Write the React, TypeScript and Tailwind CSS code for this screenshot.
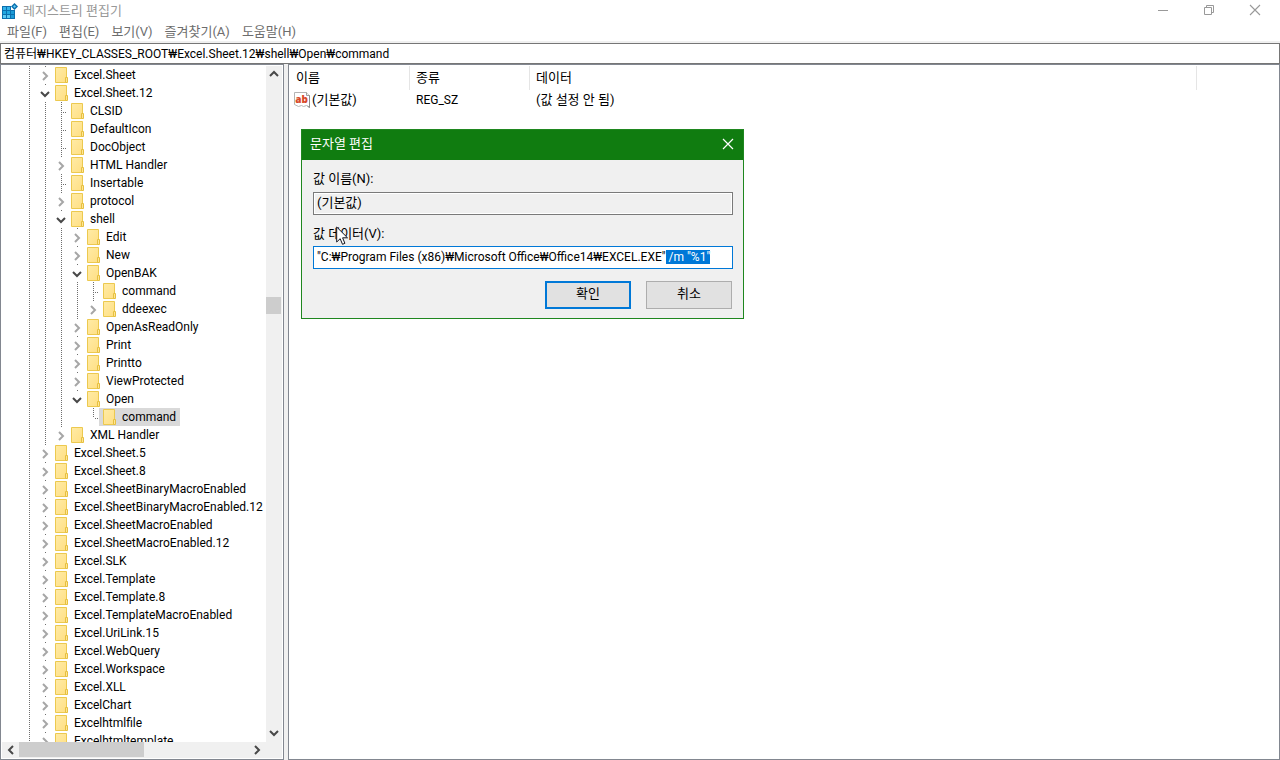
import { useEffect, useRef } from "react";

type NodeState = "leaf" | "open" | "closed";

interface TreeRow {
  label: string;
  state: NodeState;
  /** Columns left of the toggle; true where the ancestor line continues. */
  guides: boolean[];
  last?: boolean;
  selected?: boolean;
}

const top = [true];
const sheet = [true, true];
const shell = [true, true, true];

const rows: TreeRow[] = [
  { label: "Excel.Sheet", state: "closed", guides: top },
  { label: "Excel.Sheet.12", state: "open", guides: top },
  { label: "CLSID", state: "leaf", guides: sheet },
  { label: "DefaultIcon", state: "leaf", guides: sheet },
  { label: "DocObject", state: "leaf", guides: sheet },
  { label: "HTML Handler", state: "closed", guides: sheet },
  { label: "Insertable", state: "leaf", guides: sheet },
  { label: "protocol", state: "closed", guides: sheet },
  { label: "shell", state: "open", guides: sheet },
  { label: "Edit", state: "closed", guides: shell },
  { label: "New", state: "closed", guides: shell },
  { label: "OpenBAK", state: "open", guides: shell },
  { label: "command", state: "leaf", guides: [...shell, true] },
  { label: "ddeexec", state: "closed", guides: [...shell, true], last: true },
  { label: "OpenAsReadOnly", state: "closed", guides: shell },
  { label: "Print", state: "closed", guides: shell },
  { label: "Printto", state: "closed", guides: shell },
  { label: "ViewProtected", state: "closed", guides: shell },
  { label: "Open", state: "open", guides: shell, last: true },
  { label: "command", state: "leaf", guides: [...shell, false], last: true, selected: true },
  { label: "XML Handler", state: "closed", guides: sheet, last: true },
  ...[
    "Excel.Sheet.5",
    "Excel.Sheet.8",
    "Excel.SheetBinaryMacroEnabled",
    "Excel.SheetBinaryMacroEnabled.12",
    "Excel.SheetMacroEnabled",
    "Excel.SheetMacroEnabled.12",
    "Excel.SLK",
    "Excel.Template",
    "Excel.Template.8",
    "Excel.TemplateMacroEnabled",
    "Excel.UriLink.15",
    "Excel.WebQuery",
    "Excel.Workspace",
    "Excel.XLL",
    "ExcelChart",
    "Excelhtmlfile",
    "Excelhtmltemplate",
  ].map((label): TreeRow => ({ label, state: "closed", guides: top })),
];

const menus = ["파일(F)", "편집(E)", "보기(V)", "즐겨찾기(A)", "도움말(H)"];

function RegistryIcon() {
  return (
    <svg width="16" height="16" viewBox="0 0 16 16" aria-hidden="true">
      <path d="M0 3h13v13H0z" fill="#0b6fae" />
      <path d="M1 4h3v3H1zM5 4h3v3H5z" fill="#35b4ea" />
      <path d="M1 8h3v3H1zM5 8h3v3H5z" fill="#22a7e0" />
      <path d="M9 8h3v3H9zM9 12h3v3H9z" fill="#1b9ad6" />
      <path d="M1 12h3v3H1zM5 12h3v3H5z" fill="#5cc9f2" />
      <path d="M9 0h7v7H9z" fill="#fff" />
      <path d="M12.500 0 16 3.500 12.500 7 9 3.500z" fill="#0b6fae" />
      <path d="M12.500 2 14 3.500 12.500 5 11 3.500z" fill="#5cc9f2" />
    </svg>
  );
}

function FolderIcon() {
  return (
    <svg width="14" height="16" viewBox="0 0 14 16" className="shrink-0" aria-hidden="true">
      <defs>
        <linearGradient id="folder" x1="0" y1="0" x2="1" y2="1">
          <stop offset="0" stopColor="#ffeba6" />
          <stop offset="1" stopColor="#ffdf83" />
        </linearGradient>
      </defs>
      <path d="M.5.5h11v15H.5z" fill="url(#folder)" stroke="#ecc94f" />
      <path d="M10.500 10.500h2v5h-2z" fill="#ffe594" stroke="#e6c040" />
    </svg>
  );
}

function StringValueIcon() {
  return (
    <svg width="16" height="16" viewBox="0 0 16 16" className="shrink-0" aria-hidden="true">
      <path d="M.5.5h12l3 3v12l-3-2-3 1-2-1-3 1-4-2z" fill="#fff" stroke="#b4b4b4" />
      <path d="M12.500 .5v3h3" fill="#eee" stroke="#a0a0a0" />
      <path d="M15.500 3.500v12l-2-1.500" fill="none" stroke="#8c8c8c" />
      <text x="7.500" y="10.500" textAnchor="middle" fontFamily="Open Sans, sans-serif" fontSize="10" fontWeight="800" fill="#d8492a">
        ab
      </text>
    </svg>
  );
}

function Chevron({ dir, tone = "dark" }: { dir: "up" | "down" | "left" | "right"; tone?: "dark" | "light" }) {
  const d = {
    up: "M1 7l4-4 4 4",
    down: "M1 3l4 4 4-4",
    left: "M7 1 3 5l4 4",
    right: "M3 1l4 4-4 4",
  }[dir];
  return (
    <svg width="10" height="10" viewBox="0 0 10 10" aria-hidden="true">
      <path d={d} fill="none" stroke={tone === "dark" ? "#484848" : "#a6a6a6"} strokeWidth="2" />
    </svg>
  );
}

function Guide({ visible }: { visible: boolean }) {
  return (
    <span className="flex h-full w-4 shrink-0 justify-end pr-[7px]">
      {visible && <span className="h-full w-px bg-[linear-gradient(#6e6e6e_50%,transparent_50%)] bg-[length:1px_2px]" />}
    </span>
  );
}

function Toggle({ row }: { row: TreeRow }) {
  if (row.state === "leaf") {
    return (
      <span className="flex h-full w-[14px] shrink-0 pl-2">
        <span
          className={`w-px shrink-0 bg-[linear-gradient(#6e6e6e_50%,transparent_50%)] bg-[length:1px_2px] ${row.last ? "h-[10px]" : "h-full"}`}
        />
        <span className="mt-[10px] ml-px h-px grow bg-[linear-gradient(90deg,#6e6e6e_50%,transparent_50%)] bg-[length:2px_1px]" />
      </span>
    );
  }
  return (
    <button type="button" aria-label={row.label} className="flex h-full w-[14px] shrink-0 flex-col items-start">
      <span className="ml-2 h-px w-px bg-[#6e6e6e]" />
      <span className="pt-1 pl-[3px]">
        <Chevron dir={row.state === "open" ? "down" : "right"} tone={row.state === "open" ? "dark" : "light"} />
      </span>
    </button>
  );
}

function TreePane() {
  return (
    <nav className="grid w-[284px] shrink-0 grid-cols-[minmax(0,1fr)_16px] grid-rows-[minmax(0,1fr)_16px] border border-[#828790] p-px">
      <ul role="tree" className="min-h-0 overflow-hidden pl-[19px]">
        {rows.map((row, i) => (
          <li
            key={i}
            role="treeitem"
            aria-level={row.guides.length + 1}
            aria-selected={!!row.selected}
            aria-expanded={row.state === "leaf" ? undefined : row.state === "open"}
            className="flex h-[18px] items-start"
          >
            {row.guides.map((visible, g) => (
              <Guide key={g} visible={visible} />
            ))}
            <Toggle row={row} />
            <span className={`flex h-[18px] items-center gap-[5px] px-1 ${row.selected ? "bg-[#d9d9d9]" : ""}`}>
              <FolderIcon />
              <span className="leading-[18px] whitespace-nowrap">{row.label}</span>
            </span>
          </li>
        ))}
      </ul>
      <div className="flex min-h-0 flex-col bg-[#f0f0f0]">
        <button type="button" aria-label="위로 스크롤" className="flex h-4 w-[15px] items-center justify-center">
          <Chevron dir="up" />
        </button>
        <div className="min-h-0 grow pt-[215px]">
          <div className="h-[17px] w-[15px] bg-[#cdcdcd]" />
        </div>
        <button type="button" aria-label="아래로 스크롤" className="flex h-[18px] w-[15px] items-center justify-center">
          <Chevron dir="down" />
        </button>
      </div>
      <div className="col-span-2 flex bg-[#f0f0f0] pr-[17px]">
        <button type="button" aria-label="왼쪽으로 스크롤" className="flex h-[15px] w-[17px] items-center justify-center">
          <Chevron dir="left" />
        </button>
        <div className="grow">
          <div className="h-[15px] w-[125px] bg-[#cdcdcd]" />
        </div>
        <button type="button" aria-label="오른쪽으로 스크롤" className="flex h-[15px] w-[17px] items-center justify-center">
          <Chevron dir="right" />
        </button>
      </div>
    </nav>
  );
}

function ValueList() {
  return (
    <main className="min-w-0 grow border border-[#828790] pt-px">
      <table className="w-full table-fixed border-separate border-spacing-0 text-left text-[13px]">
        <colgroup>
          <col className="w-[121px]" />
          <col className="w-[120px]" />
          <col className="w-[667px]" />
          <col />
        </colgroup>
        <thead>
          <tr className="h-6">
            <th className="border-r border-[#e5e5e5] p-0 pl-[7px] leading-5 font-normal">이름</th>
            <th className="border-r border-[#e5e5e5] p-0 pl-[6px] leading-5 font-normal">종류</th>
            <th className="border-r border-[#e5e5e5] p-0 pl-[6px] leading-5 font-normal">데이터</th>
            <td />
          </tr>
        </thead>
        <tbody>
          <tr className="h-5">
            <td className="p-0 pl-[5px]">
              <span className="flex items-center gap-0.5 leading-[18px]">
                <StringValueIcon />
                (기본값)
              </span>
            </td>
            <td className="p-0 pl-[6px] text-xs">REG_SZ</td>
            <td className="p-0 pl-[6px] leading-[18px]">(값 설정 안 됨)</td>
            <td />
          </tr>
        </tbody>
      </table>
    </main>
  );
}

const command = '"C:₩Program Files (x86)₩Microsoft Office₩Office14₩EXCEL.EXE" /m "%1"';

function EditStringDialog() {
  const dataRef = useRef<HTMLInputElement>(null);

  useEffect(() => {
    const input = dataRef.current;
    if (!input) return;
    input.focus();
    input.setSelectionRange(command.indexOf(" /m"), command.length);
  }, []);

  return (
    <div
      role="dialog"
      aria-labelledby="dialog-title"
      className="absolute top-[129px] left-[301px] w-[443px] border border-[#1f871f] bg-[#f0f0f0] text-[13px]"
    >
      <header className="flex h-[30px] items-center justify-between bg-[#107c10] pr-[9px] pl-2 text-white">
        <h2 id="dialog-title" className="pb-0.5">
          문자열 편집
        </h2>
        <button type="button" aria-label="닫기" className="pb-0.5">
          <svg width="12" height="12" viewBox="0 0 12 12" aria-hidden="true">
            <path d="M1 1l10 10M11 1 1 11" stroke="#fff" strokeWidth="1.200" />
          </svg>
        </button>
      </header>
      <form className="pt-[9px] pr-2.5 pb-[9px] pl-[11px]" onSubmit={(e) => e.preventDefault()}>
        <label htmlFor="value-name" className="block h-[23px] leading-5">
          값 이름(N):
        </label>
        <input
          id="value-name"
          readOnly
          defaultValue="(기본값)"
          className="block h-[23px] w-full border border-[#7a7a7a] bg-[#f0f0f0] px-[3px] pb-1 shadow-[inset_0_0_0_1px_#fff] outline-none"
        />
        <label htmlFor="value-data" className="block h-[31px] pt-2 leading-[22px]">
          값 데이터(V):
        </label>
        <input
          id="value-data"
          ref={dataRef}
          defaultValue={command}
          spellCheck={false}
          className="block h-[23px] w-full border border-[#0078d7] bg-white px-[3px] pb-0.5 text-xs outline-none selection:bg-[#0078d7] selection:text-white"
        />
        <div className="mt-3 flex justify-end gap-[15px] pr-px">
          <button type="submit" className="h-7 w-[86px] border-2 border-[#0078d7] bg-[#e1e1e1] pb-0.5">
            확인
          </button>
          <button type="button" className="h-7 w-[86px] border border-[#adadad] bg-[#e1e1e1] pb-0.5">
            취소
          </button>
        </div>
      </form>
    </div>
  );
}

function MousePointer() {
  return (
    <svg width="13" height="20" viewBox="0 0 13 20" className="pointer-events-none absolute top-[226px] left-[336px]" aria-hidden="true">
      <path d="M.7 1v15l3.500-3.300 2.300 5.600 2.400-1-2.300-5.500h4.900z" fill="#fff" stroke="#14141e" strokeWidth="1" />
    </svg>
  );
}

export default function App() {
  return (
    <div
      lang="ko"
      className="relative flex h-screen flex-col overflow-hidden bg-white font-['Roboto','Noto_Sans_CJK_KR',sans-serif] text-xs text-black"
    >
      <header className="flex h-[22px] shrink-0 items-center justify-between pr-[19px] pl-0.5 text-[#999]">
        <div className="flex items-center gap-[5px]">
          <RegistryIcon />
          <h1 className="text-[13px] leading-5">레지스트리 편집기</h1>
        </div>
        <div className="flex items-center gap-[34px] pb-0.5">
          <button type="button" aria-label="최소화">
            <svg width="12" height="12" viewBox="0 0 12 12" aria-hidden="true">
              <path d="M1 6.500h10" stroke="#999" />
            </svg>
          </button>
          <button type="button" aria-label="이전 크기로 복원">
            <svg width="12" height="12" viewBox="0 0 12 12" fill="none" stroke="#999" aria-hidden="true">
              <path d="M1.500 3.500h7v7h-7zM3.500 3.500v-2h7v7h-2" />
            </svg>
          </button>
          <button type="button" aria-label="닫기">
            <svg width="12" height="12" viewBox="0 0 12 12" aria-hidden="true">
              <path d="M1 1l10 10M11 1 1 11" stroke="#999" strokeWidth="1.100" />
            </svg>
          </button>
        </div>
      </header>
      <div role="menubar" className="flex h-[19px] shrink-0 items-center gap-3 pl-[7px] text-[13px] text-[#6d6d6d]">
        {menus.map((m) => (
          <button key={m} type="button" role="menuitem" className="leading-[19px]">
            {m}
          </button>
        ))}
      </div>
      <div className="shrink-0 border-t-2 border-[#f0f0f0]">
        <input
          aria-label="주소"
          defaultValue="컴퓨터₩HKEY_CLASSES_ROOT₩Excel.Sheet.12₩shell₩Open₩command"
          spellCheck={false}
          className="block h-[21px] w-full border border-[#767676] px-[3px] pb-0.5 outline-none"
        />
      </div>
      <div className="flex min-h-0 grow gap-1 bg-[#f0f0f0] *:bg-white">
        <TreePane />
        <ValueList />
      </div>
      <EditStringDialog />
      <MousePointer />
    </div>
  );
}
